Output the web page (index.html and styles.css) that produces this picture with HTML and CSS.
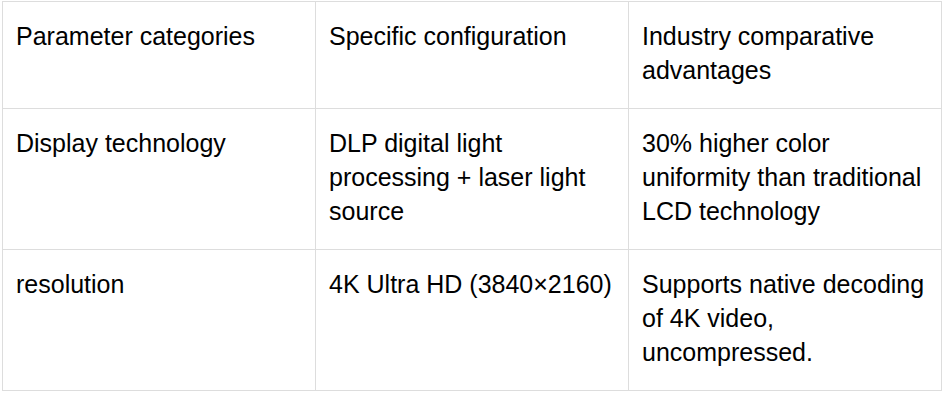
FILE: index.html
```html
<!DOCTYPE html>
<html>
<head>
<meta charset="utf-8">
<link rel="stylesheet" href="styles.css">
</head>
<body>
<table class="spec">
  <tr>
    <td>Parameter categories</td>
    <td>Specific configuration</td>
    <td>Industry comparative advantages</td>
  </tr>
  <tr>
    <td>Display technology</td>
    <td>DLP digital light processing + laser light source</td>
    <td>30% higher color uniformity than traditional LCD technology</td>
  </tr>
  <tr>
    <td>resolution</td>
    <td>4K Ultra HD (3840×2160)</td>
    <td>Supports native decoding of 4K video, uncompressed.</td>
  </tr>
</table>
</body>
</html>
```
FILE: styles.css
```css
html, body {
  margin: 0;
  background: #fff;
}
body {
  padding: 1px 0 0 2px;
  font-family: "Liberation Sans", Arial, sans-serif;
  color: #000;
}
.spec {
  border-collapse: collapse;
  width: 940px;
  table-layout: fixed;
}
.spec td {
  border: 1px solid #dddddd;
  vertical-align: top;
  font-size: 25px;
  line-height: 34px;
  padding: 17px 13px 21px 13px;
  text-align: left;
}
```
